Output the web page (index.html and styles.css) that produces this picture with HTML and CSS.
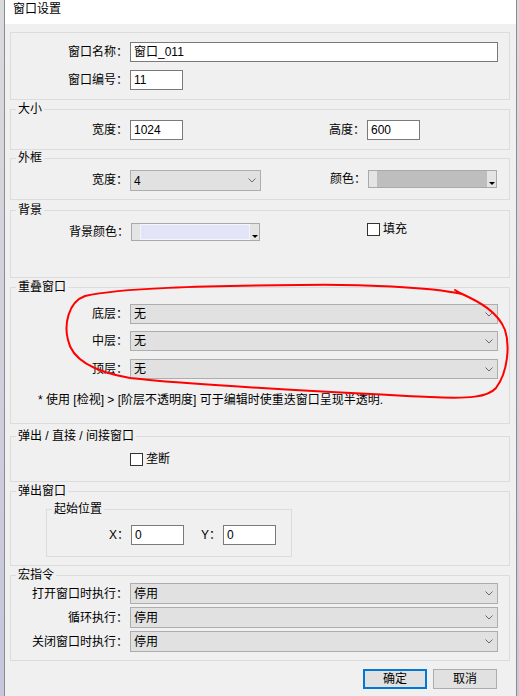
FILE: index.html
```html
<!DOCTYPE html>
<html lang="zh-CN">
<head>
<meta charset="utf-8">
<title>窗口设置</title>
<link rel="stylesheet" href="styles.css">
</head>
<body>
<div class="window">
  <div class="titlebar">窗口设置</div>

  <fieldset class="group g-name">
    <div class="row">
      <span class="lbl">窗口名称：</span>
      <div class="tb grow">窗口_011</div>
    </div>
    <div class="row row-gap8">
      <span class="lbl">窗口编号：</span>
      <div class="tb short">11</div>
    </div>
  </fieldset>

  <fieldset class="group g-size">
    <legend>大小</legend>
    <div class="row">
      <span class="lbl">宽度：</span>
      <div class="tb short">1024</div>
      <span class="lbl lbl-h">高度：</span>
      <div class="tb short">600</div>
    </div>
  </fieldset>

  <fieldset class="group g-frame">
    <legend>外框</legend>
    <div class="row row-top row-21">
      <span class="lbl lbl-21">宽度：</span>
      <div class="sel sel-w">4<svg class="chev" width="8" height="5" viewBox="0 0 8 5"><polyline points="0.5,0.5 4,4 7.5,0.5" fill="none" stroke="#6a6a6a" stroke-width="1"/></svg></div>
      <span class="lbl lbl-c lbl-21">颜色：</span>
      <div class="cc cc-frame"><span class="cc-l"></span><span class="cc-sw sw-grey"></span><span class="cc-r"><i class="tri"></i></span></div>
    </div>
  </fieldset>

  <fieldset class="group g-bg">
    <legend>背景</legend>
    <div class="row row-top row-18">
      <span class="lbl lbl-bg">背景颜色：</span>
      <div class="cc cc-bg"><span class="cc-l"></span><span class="cc-sw sw-lav"></span><span class="cc-r"><i class="tri"></i></span></div>
      <span class="chk chk-fill"><i class="box"></i>填充</span>
    </div>
  </fieldset>

  <fieldset class="group g-overlap">
    <legend>重叠窗口</legend>
    <div class="row">
      <span class="lbl">底层：</span>
      <div class="sel grow">无<svg class="chev" width="8" height="5" viewBox="0 0 8 5"><polyline points="0.5,0.5 4,4 7.5,0.5" fill="none" stroke="#6a6a6a" stroke-width="1"/></svg></div>
    </div>
    <div class="row row-gap7">
      <span class="lbl">中层：</span>
      <div class="sel grow">无<svg class="chev" width="8" height="5" viewBox="0 0 8 5"><polyline points="0.5,0.5 4,4 7.5,0.5" fill="none" stroke="#6a6a6a" stroke-width="1"/></svg></div>
    </div>
    <div class="row row-gap8">
      <span class="lbl">顶层：</span>
      <div class="sel grow">无<svg class="chev" width="8" height="5" viewBox="0 0 8 5"><polyline points="0.5,0.5 4,4 7.5,0.5" fill="none" stroke="#6a6a6a" stroke-width="1"/></svg></div>
    </div>
    <p class="note">* 使用 [检视] &gt; [阶层不透明度] 可于编辑时使重迭窗口呈现半透明.</p>
  </fieldset>

  <fieldset class="group g-popup-kind">
    <legend>弹出 / 直接 / 间接窗口</legend>
    <div class="row row-15">
      <span class="chk chk-mono"><i class="box"></i>垄断</span>
    </div>
  </fieldset>

  <fieldset class="group g-popup">
    <legend>弹出窗口</legend>
    <fieldset class="inner">
      <legend>起始位置</legend>
      <div class="row">
        <span class="lbl lbl-x">X：</span>
        <div class="tb short">0</div>
        <span class="lbl lbl-y">Y：</span>
        <div class="tb short">0</div>
      </div>
    </fieldset>
  </fieldset>

  <fieldset class="group g-macro">
    <legend>宏指令</legend>
    <div class="row row-21">
      <span class="lbl">打开窗口时执行：</span>
      <div class="sel grow">停用<svg class="chev" width="8" height="5" viewBox="0 0 8 5"><polyline points="0.5,0.5 4,4 7.5,0.5" fill="none" stroke="#6a6a6a" stroke-width="1"/></svg></div>
    </div>
    <div class="row row-21 row-gap3">
      <span class="lbl">循环执行：</span>
      <div class="sel grow">停用<svg class="chev" width="8" height="5" viewBox="0 0 8 5"><polyline points="0.5,0.5 4,4 7.5,0.5" fill="none" stroke="#6a6a6a" stroke-width="1"/></svg></div>
    </div>
    <div class="row row-21 row-gap3">
      <span class="lbl">关闭窗口时执行：</span>
      <div class="sel grow">停用<svg class="chev" width="8" height="5" viewBox="0 0 8 5"><polyline points="0.5,0.5 4,4 7.5,0.5" fill="none" stroke="#6a6a6a" stroke-width="1"/></svg></div>
    </div>
  </fieldset>

  <div class="buttons">
    <div class="btn btn-default">确定</div>
    <div class="btn">取消</div>
  </div>
</div>

<svg class="annot" width="519" height="696" viewBox="0 0 519 696">
  <path d="M 455 290 L 462 294 C 430 287, 360 284, 300 285 C 200 286, 120 288, 85 296 C 68 302, 64 325, 68 340 C 72 360, 95 372, 130 378 C 200 386, 330 392, 430 397 C 470 399, 488 397, 496 388 C 508 372, 510 345, 505 330 C 498 312, 480 302, 460 293" fill="none" stroke="#ff0000" stroke-width="2" stroke-linecap="round" stroke-linejoin="round"/>
</svg>
</body>
</html>
```

FILE: styles.css
```css
* { box-sizing: border-box; }

html, body {
  margin: 0;
  padding: 0;
}

body {
  position: relative;
  width: 519px;
  height: 696px;
  overflow: hidden;
  background: linear-gradient(#dadade, #c6c6dc);
  font-family: "Liberation Sans", "Noto Sans CJK SC", sans-serif;
  font-size: 12px;
  color: #000;
}

.window {
  margin-left: 4px;
  width: 513px;
  height: 696px;
  border-left: 1px solid #8c8c8c;
  border-right: 1px solid #8c8c8c;
  background: #f0f0f0;
  display: flex;
  flex-direction: column;
}

.titlebar {
  height: 24px;
  flex: none;
  background: #fff;
  padding: 2px 0 0 8px;
  line-height: 14px;
}

/* group boxes */
.group {
  flex: none;
  width: 500px;
  margin: 0 0 0 5px;
  min-width: 0;
  border: 1px solid #dcdcdc;
  padding: 0 11px 0 0;
}

legend {
  margin-left: 5px;
  padding: 0 2px;
  font-size: 12px;
  line-height: 14px;
}

.g-name { margin-top: 8px; padding-top: 9px; padding-bottom: 9px; }
.g-size { margin-top: 2px; padding-top: 4px; padding-bottom: 9px; }
.g-frame { margin-top: 1px; padding-top: 5px; padding-bottom: 8px; }
.g-bg { margin-top: 3px; padding-top: 6px; padding-bottom: 36px; }
.g-overlap { margin-top: 2px; padding-top: 10px; padding-bottom: 16px; }
.g-popup-kind { margin-top: 5px; padding-top: 9px; padding-bottom: 14px; }
.g-popup { margin-top: 2px; padding-top: 4px; padding-bottom: 8px; }
.g-macro { margin-top: 2px; padding-top: 1px; padding-bottom: 8px; }

.inner {
  margin: 0 0 0 35px;
  width: 246px;
  min-width: 0;
  border: 1px solid #dcdcdc;
  padding: 9px 0 11px 0;
}

/* rows */
.row {
  display: flex;
  align-items: center;
  height: 20px;
}
.row-top { align-items: flex-start; }
.row-21 { height: 21px; }
.row-18 { height: 18px; }
.row-15 { height: 15px; }
.row-gap3 { margin-top: 3px; }
.row-gap7 { margin-top: 7px; }
.row-gap8 { margin-top: 8px; }

.lbl {
  flex: none;
  width: 119px;
  padding-right: 2px;
  text-align: right;
  white-space: nowrap;
  line-height: 20px;
}
.lbl-21 { line-height: 21px; }
.lbl-h { width: 184px; }
.lbl-c { width: 107px; padding-right: 2px; line-height: 19px; }
.lbl-bg { width: 120px; line-height: 18px; }
.lbl-x { width: 84px; }
.lbl-y { width: 39px; }

/* text boxes */
.tb {
  flex: none;
  height: 20px;
  border: 1px solid #7a7a7a;
  background: #fff;
  padding-left: 3px;
  line-height: 18px;
  white-space: nowrap;
}
.tb.grow { flex: 1; }
.tb.short { width: 53px; }

/* combo boxes */
.sel {
  display: flex;
  align-items: center;
  height: 20px;
  border: 1px solid #adadad;
  background: #e1e1e1;
  padding-left: 3px;
  line-height: 18px;
}
.row-21 .sel { height: 21px; }
.sel.grow { flex: 1; }
.sel-w { flex: none; width: 131px; }
.chev {
  flex: none;
  margin-left: auto;
  margin-right: 4px;
}

/* colour pickers */
.cc {
  flex: none;
  display: flex;
  height: 18px;
  border: 1px solid #a9a9a9;
  background: #e4e4e4;
}
.cc-frame { width: 129px; }
.cc-bg { width: 129px; }
.cc-l { width: 8px; flex: none; }
.cc-sw { flex: 1; }
.sw-grey { background: #bebebe; }
.sw-lav { background: #e4e4f8; border: 1px solid #f4f4fc; }
.cc-r {
  width: 9px;
  flex: none;
  display: flex;
  justify-content: center;
  align-items: flex-end;
  padding-bottom: 2px;
}
.tri {
  display: block;
  width: 0;
  height: 0;
  border-left: 3px solid transparent;
  border-right: 3px solid transparent;
  border-top: 3px solid #000;
}

/* checkboxes */
.chk {
  display: flex;
  align-items: center;
  height: 15px;
  line-height: 15px;
  white-space: nowrap;
}
.chk .box {
  display: block;
  width: 13px;
  height: 13px;
  border: 1px solid #333;
  background: #fff;
  margin-right: 3px;
}
.chk-fill { margin-left: 107px; margin-top: -1px; }
.chk-mono { margin-left: 119px; }

.note {
  margin: 14px 0 0 27px;
  line-height: 14px;
  white-space: nowrap;
}

/* buttons */
.buttons {
  display: flex;
  justify-content: flex-end;
  gap: 6px;
  margin-top: 8px;
  padding-right: 19px;
}
.btn {
  width: 64px;
  height: 20px;
  border: 1px solid #adadad;
  background: #e1e1e1;
  text-align: center;
  line-height: 18px;
}
.btn-default {
  border: 2px solid #0078d7;
  line-height: 16px;
}

.annot {
  position: absolute;
  left: 0;
  top: 0;
  pointer-events: none;
}
```
